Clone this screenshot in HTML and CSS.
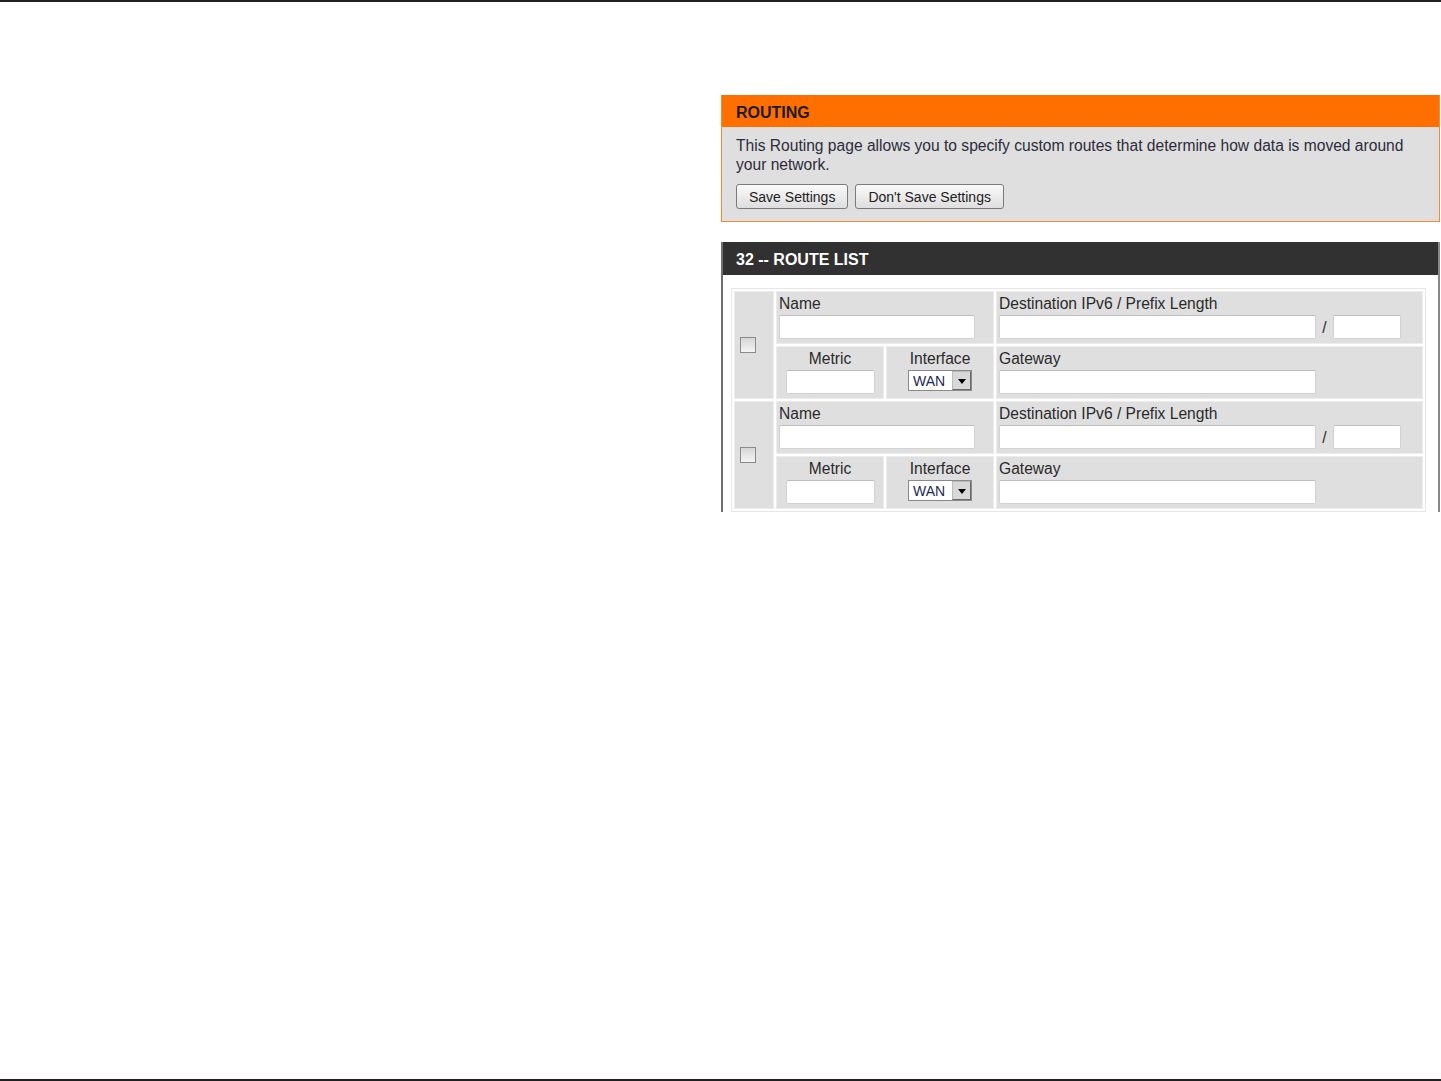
FILE: index.html
```html
<!DOCTYPE html>
<html lang="en">
<head>
    <meta charset="UTF-8">
    <title>Routing</title>
    <link rel="stylesheet" href="styles.css">
</head>
<body>
    <div class="page">
        <div class="content">
            <div class="box routing">
                <div class="box-head">ROUTING</div>
                <div class="box-body">
                    <p>This Routing page allows you to specify custom routes that determine how data is moved around your network.</p>
                    <div class="buttons">
                        <button type="button">Save Settings</button>
                        <button type="button">Don't Save Settings</button>
                    </div>
                </div>
            </div>

            <div class="box route-list">
                <div class="box-head dark">32 -- ROUTE LIST</div>
                <div class="list-body">
                    <table class="routes">
                        <tr>
                            <td class="check" rowspan="2"><input type="checkbox"></td>
                            <td class="cell" colspan="2">Name<br><input type="text" class="name"></td>
                            <td class="cell dest">Destination IPv6 / Prefix Length<br><input type="text" class="wide"> <span class="slash">/</span> <input type="text" class="prefix"></td>
                        </tr>
                        <tr>
                            <td class="cell center metric">Metric<br><input type="text" class="metric-in"></td>
                            <td class="cell center iface">Interface<br><span class="select"><select><option>WAN</option></select></span></td>
                            <td class="cell">Gateway<br><input type="text" class="wide"></td>
                        </tr>
                        <tr>
                            <td class="check" rowspan="2"><input type="checkbox"></td>
                            <td class="cell" colspan="2">Name<br><input type="text" class="name"></td>
                            <td class="cell dest">Destination IPv6 / Prefix Length<br><input type="text" class="wide"> <span class="slash">/</span> <input type="text" class="prefix"></td>
                        </tr>
                        <tr>
                            <td class="cell center metric">Metric<br><input type="text" class="metric-in"></td>
                            <td class="cell center iface">Interface<br><span class="select"><select><option>WAN</option></select></span></td>
                            <td class="cell">Gateway<br><input type="text" class="wide"></td>
                        </tr>
                    </table>
                </div>
            </div>
        </div>
    </div>
</body>
</html>
```

FILE: styles.css
```css
body {
    margin: 0;
    padding: 0;
    background-color: #fff;
    font-family: "Liberation Sans", Arial, sans-serif;
    color: #2a2a2a;
}
.page {
    height: 1081px;
    box-sizing: border-box;
    border-top: 2px solid #231f20;
    border-bottom: 2px solid #231f20;
}
.content {
    margin-left: 721px;
    width: 719px;
    padding-top: 93px;
}
.box-head {
    height: 32px;
    box-sizing: border-box;
    padding: 9px 0 0 14px;
    font-size: 16px;
    font-weight: bold;
    color: #1a1a1a;
    background-color: #ff6f00;
}
.routing {
    border: 1px solid #f58a30;
    border-top: none;
    background-color: #dfdfdf;
}
.box-body {
    padding: 9px 14px 12px;
}
.box-body p {
    margin: 0;
    font-size: 15.6px;
    line-height: 19px;
    color: #2c2c3a;
}
.buttons {
    margin-top: 10px;
    display: flex;
    gap: 7px;
}
.buttons button {
    height: 25px;
    padding: 0 12px;
    font-family: inherit;
    font-size: 14px;
    color: #222;
    border: 1px solid #7b7b7b;
    border-radius: 3px;
    background: linear-gradient(#fafafa, #dedede);
}
.route-list {
    margin-top: 20px;
    height: 270px;
    overflow: hidden;
    border-left: 2px solid #6f6f6f;
    border-right: 2px solid #888;
}
.box-head.dark {
    height: 33px;
    padding: 9px 0 0 13px;
    color: #fff;
    background-color: #313131;
}
.list-body {
    padding: 13px 12px 0 8px;
}
.routes {
    border-collapse: separate;
    border-spacing: 2px;
    border: 1px solid #e6e6e6;
    font-size: 15.6px;
}
.routes td {
    background-color: #dfdfdf;
    border: 1px solid #ececec;
    vertical-align: top;
    padding: 3px 2px 4px;
}
.routes .check {
    width: 32px;
    vertical-align: middle;
    padding: 0 3px;
}
.check input {
    appearance: none;
    display: block;
    width: 16px;
    height: 16px;
    margin: 0 0 0 2px;
    border: 1px solid #8a8a8a;
    background: linear-gradient(#d6d6d6, #f4f4f4);
}
.cell {
    line-height: 18px;
}
.center {
    text-align: center;
}
.metric, .iface {
    width: 102px;
}
.dest {
    width: 421px;
}
.routes input[type="text"] {
    height: 24px;
    box-sizing: border-box;
    margin: 2px 0 0;
    border: 1px solid #d2d2d2;
    border-top-color: #bdbdbd;
    border-radius: 2px;
    background: #fff;
    vertical-align: top;
}
.name {
    width: 196px;
}
.wide {
    width: 317px;
}
.prefix {
    width: 68px;
}
.slash {
    display: inline-block;
    margin: 6px 2px 0;
}
.metric-in {
    width: 89px;
}
.select {
    position: relative;
    display: inline-block;
    margin-top: 2px;
}
.select select {
    appearance: none;
    width: 64px;
    height: 21px;
    padding: 0 0 0 4px;
    font-family: inherit;
    font-size: 14px;
    color: #1a2a5a;
    border: 1px solid #8a8a8a;
    border-radius: 0;
    background: #fff;
}
.select::after {
    content: "";
    position: absolute;
    right: 1px;
    top: 1px;
    width: 19px;
    height: 19px;
    box-sizing: border-box;
    border: 1px solid #6a6a6a;
    border-top-color: #bbb;
    border-left-color: #bbb;
    background: #d8d8d8;
    pointer-events: none;
}
.select::before {
    content: "";
    position: absolute;
    z-index: 1;
    right: 6px;
    top: 9px;
    border-left: 4.5px solid transparent;
    border-right: 4.5px solid transparent;
    border-top: 5px solid #000;
    pointer-events: none;
}
```
